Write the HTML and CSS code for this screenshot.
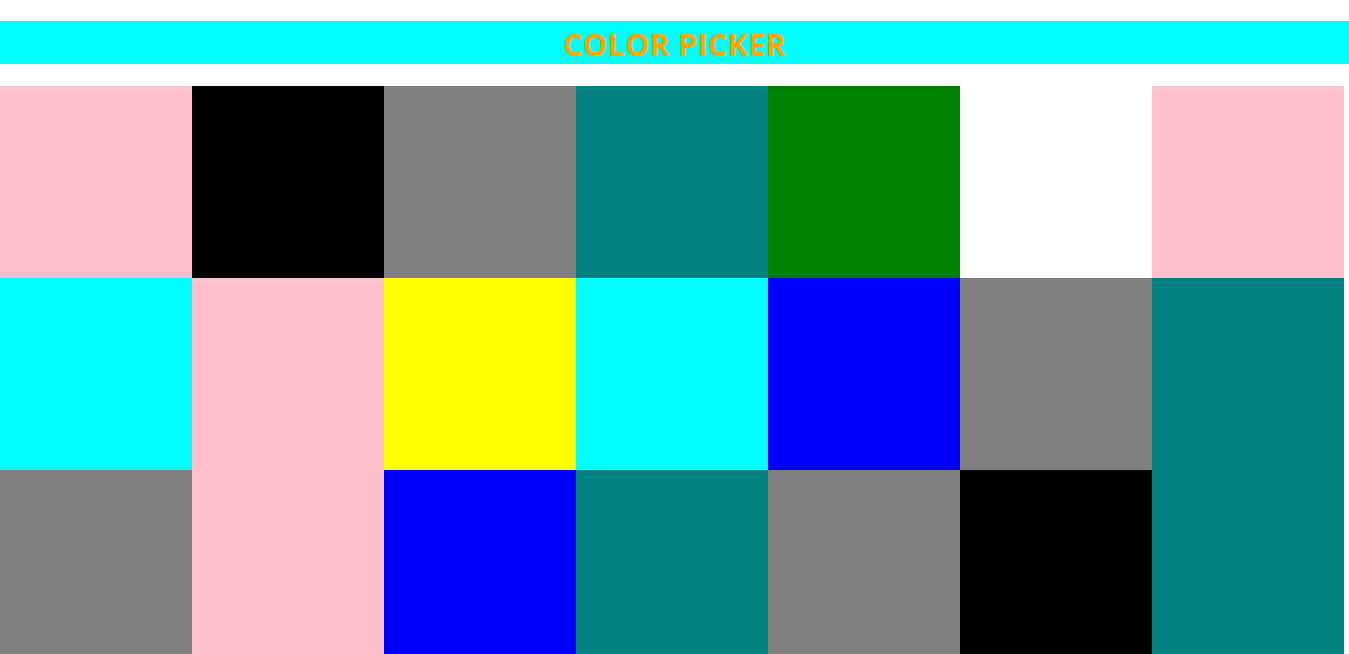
FILE: index.html
```html
<!DOCTYPE html>
<html>
<head>
<meta charset="utf-8">
<title>Color Picker</title>
<link rel="stylesheet" href="styles.css">
</head>
<body>
<h1 class="title">COLOR PICKER</h1>
<div class="grid">
  <div class="box pink"></div>
  <div class="box black"></div>
  <div class="box gray"></div>
  <div class="box teal"></div>
  <div class="box green"></div>
  <div class="box white"></div>
  <div class="box pink"></div>
  <div class="box cyan"></div>
  <div class="box pink"></div>
  <div class="box yellow"></div>
  <div class="box cyan"></div>
  <div class="box blue"></div>
  <div class="box gray"></div>
  <div class="box teal"></div>
  <div class="box gray"></div>
  <div class="box pink"></div>
  <div class="box blue"></div>
  <div class="box teal"></div>
  <div class="box gray"></div>
  <div class="box black"></div>
  <div class="box teal"></div>
</div>
</body>
</html>
```
FILE: styles.css
```css
body {
  margin: 0;
  font-family: "Open Sans", sans-serif;
}
.title {
  margin: 21px 0 22px;
  height: 43px;
  line-height: 46px;
  background: #00ffff;
  color: #ffa500;
  font-size: 31px;
  font-weight: 700;
  text-align: center;
}
.grid {
  display: grid;
  grid-template-columns: repeat(7, 192px);
  grid-auto-rows: 192px;
}
.pink { background: #ffc0cb; }
.black { background: #000000; }
.gray { background: #808080; }
.teal { background: #008080; }
.green { background: #008000; }
.white { background: #ffffff; }
.cyan { background: #00ffff; }
.yellow { background: #ffff00; }
.blue { background: #0000ff; }
```
